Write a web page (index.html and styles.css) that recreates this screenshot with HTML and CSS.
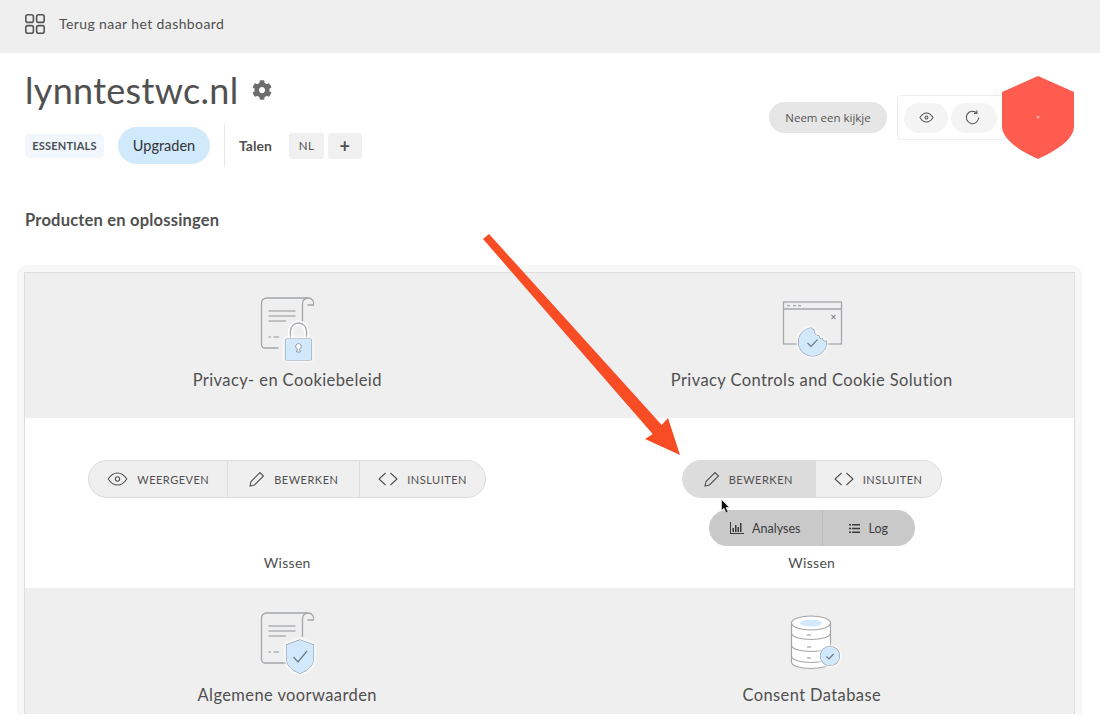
FILE: index.html
```html
<!DOCTYPE html>
<html lang="nl">
<head>
    <meta charset="UTF-8">
    <meta name="viewport" content="width=device-width, initial-scale=1.0">
    <title>lynntestwc.nl</title>
    <link rel="stylesheet" href="styles.css">
</head>
<body>
    <div class="topbar">
        <svg class="grid-icon" viewBox="0 0 20 20" width="20" height="20">
            <rect x="0.8" y="0.8" width="7.6" height="7.6" rx="2"/>
            <rect x="11.6" y="0.8" width="7.6" height="7.6" rx="2"/>
            <rect x="0.8" y="11.6" width="7.6" height="7.6" rx="2"/>
            <rect x="11.6" y="11.6" width="7.6" height="7.6" rx="2"/>
        </svg>
        <span>Terug naar het dashboard</span>
    </div>

    <div class="site-head">
        <div class="site-info">
            <div class="site-title">
                <h1>lynntestwc.nl</h1>
                <svg class="gear" viewBox="0 0 512 512" width="20" height="20"><path d="M487.4 315.7l-42.6-24.6c4.3-23.2 4.3-47 0-70.2l42.6-24.6c4.9-2.8 7.1-8.6 5.5-14-11.1-35.6-30-67.8-54.7-94.6-3.8-4.1-10-5.1-14.8-2.3L380.8 110c-17.9-15.4-38.5-27.3-60.8-35.1V25.8c0-5.6-3.9-10.5-9.4-11.7-36.7-8.2-74.3-7.8-109.2 0-5.5 1.2-9.4 6.1-9.4 11.7V75c-22.2 7.9-42.8 19.8-60.8 35.1L88.7 85.5c-4.9-2.8-11-1.9-14.8 2.3-24.7 26.7-43.6 58.9-54.7 94.6-1.7 5.4.6 11.2 5.5 14L67.3 221c-4.3 23.2-4.3 47 0 70.2l-42.6 24.6c-4.9 2.8-7.1 8.6-5.5 14 11.1 35.6 30 67.8 54.7 94.6 3.8 4.1 10 5.1 14.8 2.3l42.6-24.6c17.9 15.4 38.5 27.3 60.8 35.1v49.2c0 5.6 3.9 10.5 9.4 11.7 36.7 8.2 74.3 7.8 109.2 0 5.5-1.2 9.4-6.1 9.4-11.7v-49.2c22.2-7.9 42.8-19.8 60.8-35.1l42.6 24.6c4.9 2.8 11 1.9 14.8-2.3 24.7-26.7 43.6-58.9 54.7-94.6 1.5-5.5-.7-11.3-5.6-14.1zM256 336c-44.1 0-80-35.9-80-80s35.9-80 80-80 80 35.9 80 80-35.9 80-80 80z"/></svg>
            </div>
            <div class="plan-row">
                <span class="plan-badge">ESSENTIALS</span>
                <span class="upgrade">Upgraden</span>
                <span class="divider"></span>
                <span class="lang-label">Talen</span>
                <span class="lang-btn">NL</span>
                <span class="lang-btn lang-add">+</span>
            </div>
        </div>
        <div class="site-actions">
            <span class="tour-btn">Neem een kijkje</span>
            <div class="tool-box">
                <span class="tool-btn">
                    <svg class="line-icon" viewBox="0 0 16 12" width="15" height="11"><path d="M0.8 6C3 2.6 5.4 1 8 1s5 1.6 7.2 5C13 9.4 10.6 11 8 11S3 9.4 0.8 6z"/><circle cx="8" cy="6" r="1.6"/></svg>
                </span>
                <span class="tool-btn tool-btn-wide">
                    <svg class="line-icon" viewBox="0 0 16 16" width="15" height="15"><path d="M12.6 3.2A6.6 6.6 0 1 0 14.6 8"/><path d="M9.6 3.6l3.2-.2-.2-3"/></svg>
                </span>
            </div>
        </div>
    </div>

    <h2 class="section-title">Producten en oplossingen</h2>

    <div class="products-wrap">
        <div class="products">
            <div class="product-head">
                <svg class="product-icon" viewBox="0 0 70 70" width="70" height="70">
                    <g class="doc">
                        <path d="M26.5 55H13a3.5 3.5 0 0 1-3.5-3.5V10A5 5 0 0 1 14.5 5H56a5.5 5.5 0 0 1 5.5 7H55.5"/>
                        <path d="M56 5a5.5 5.5 0 0 0-5.5 6V29"/>
                    </g>
                    <path class="doc-lines" d="M16.5 18H43.5M16.5 23H43.5M16.5 28H34M16.5 44H19M21.5 44H27"/>
                    <path class="halo" d="M38.5 46V38a8 8 0 0 1 16 0V46"/>
                    <path class="shackle" d="M38.5 46V38a8 8 0 0 1 16 0V46"/>
                    <rect class="badge-fill" x="33.5" y="46" width="26" height="21" rx="1"/>
                    <path class="keyhole" d="M44.5 59l1-3a2.8 2.8 0 1 1 2 0l1 3z"/>
                </svg>
                <span>Privacy- en Cookiebeleid</span>
            </div>
            <div class="product-head">
                <svg class="product-icon" viewBox="0 0 70 70" width="70" height="70">
                    <g transform="translate(1 0)">
                        <rect class="doc" x="5.5" y="9" width="58" height="42"/>
                        <path class="doc" d="M5.5 16H63.5"/>
                        <path class="doc-lines" d="M9 12.7h3M15 12.7h3M20 12.7h3M53.5 22l4 4M57.5 22l-4 4"/>
                        <path class="badge-fill" d="M33 35a14 14 0 1 0 15.5 13.2c-2 .6-3.5-.2-4-2-2 .2-3.5-1-3.5-3-2.5-.5-5-2.5-4.8-5.5C36 37 34.5 36.5 33 35z"/>
                        <path class="check" d="M29.5 50l3.5 3.5 6.5-7"/>
                    </g>
                </svg>
                <span>Privacy Controls and Cookie Solution</span>
            </div>

            <div class="product-body">
                <div class="btn-group">
                    <a class="btn-seg seg-view">
                        <svg class="line-icon" viewBox="0 0 22 15" width="21" height="14"><path d="M1 7.5C4 3 7.3 1 11 1s7 2 10 6.5C18 12 14.7 14 11 14S4 12 1 7.5z"/><circle cx="11" cy="7.5" r="2.3"/></svg>
                        WEERGEVEN
                    </a>
                    <a class="btn-seg seg-edit">
                        <svg class="line-icon" viewBox="0 0 16 16" width="16" height="16"><path d="M1 15l1-4.5L11 1.5l3.5 3.5-9 9z"/></svg>
                        BEWERKEN
                    </a>
                    <a class="btn-seg seg-embed">
                        <svg class="line-icon" viewBox="0 0 20 14" width="20" height="14"><path d="M7.5 1L1 7l6.5 6M12.5 1L19 7l-6.5 6"/></svg>
                        INSLUITEN
                    </a>
                </div>
                <div class="wissen">Wissen</div>
            </div>
            <div class="product-body">
                <div class="btn-group">
                    <a class="btn-seg seg-edit btn-hover">
                        <svg class="line-icon" viewBox="0 0 16 16" width="16" height="16"><path d="M1 15l1-4.5L11 1.5l3.5 3.5-9 9z"/></svg>
                        BEWERKEN
                    </a>
                    <a class="btn-seg seg-embed">
                        <svg class="line-icon" viewBox="0 0 20 14" width="20" height="14"><path d="M7.5 1L1 7l6.5 6M12.5 1L19 7l-6.5 6"/></svg>
                        INSLUITEN
                    </a>
                </div>
                <div class="sub-group">
                    <a class="sub-seg">
                        <svg class="solid-icon" viewBox="0 0 14 12" width="14" height="12"><path d="M0 0h1v11h13v1H0zM2.5 6H4v4H2.5zM5 3h1.5v7H5zM7.5 5H9v5H7.5zM10 1h1.5v9H10z"/></svg>
                        Analyses
                    </a>
                    <a class="sub-seg">
                        <svg class="solid-icon" viewBox="0 0 11 9" width="11" height="9"><path d="M0 0h2v1.6H0zM3 0h8v1.6H3zM0 3.700h2v1.6H0zM3 3.700h8v1.6H3zM0 7.400h2V9H0zM3 7.400h8V9H3z"/></svg>
                        Log
                    </a>
                </div>
                <div class="wissen wissen-tight">Wissen</div>
            </div>

            <div class="product-head">
                <svg class="product-icon" viewBox="0 0 70 70" width="70" height="70">
                    <g class="doc">
                        <path d="M34 55H13a3.5 3.5 0 0 1-3.5-3.5V10A5 5 0 0 1 14.5 5H56a5.5 5.5 0 0 1 5.5 7H55.5"/>
                        <path d="M56 5a5.5 5.5 0 0 0-5.5 6V29"/>
                    </g>
                    <path class="doc-lines" d="M16.5 18H43.5M16.5 23H43.5M16.5 28H34M16.5 44H19M21.5 44H27"/>
                    <path class="badge-fill" d="M48 32l13.5 5v14c0 6-5 11-13.5 14.5C39.5 62 34.5 57 34.5 51V37z"/>
                    <path class="check" d="M41.5 49l4.5 5 9-11"/>
                </svg>
                <span>Algemene voorwaarden</span>
            </div>
            <div class="product-head">
                <svg class="product-icon" viewBox="0 0 70 70" width="70" height="70">
                    <path class="db" d="M14.5 15V54c0 4 9 6.5 19.5 6.5S53.5 58 53.5 54V15"/>
                    <ellipse class="db" cx="34" cy="15" rx="19.5" ry="7"/>
                    <ellipse class="db-top" cx="34" cy="15" rx="11" ry="3.5"/>
                    <path class="db-band" d="M14.5 25c0 4 9 6.5 19.5 6.5S53.5 29 53.5 25M14.5 37c0 4 9 6.5 19.5 6.5S53.5 41 53.5 37M14.5 48c0 4 9 6.5 19.5 6.5S53.5 52 53.5 48"/>
                    <path class="doc-lines" d="M30 27h4M30 39h4M30 50h4"/>
                    <circle class="badge-fill" cx="53" cy="48" r="9.5"/>
                    <path class="check" d="M49.5 48.5l2.5 2.5 4.5-5"/>
                </svg>
                <span>Consent Database</span>
            </div>
        </div>
    </div>

    <svg class="shield" viewBox="0 0 72 83" width="72" height="83">
        <path d="M36 0L72 16V50C72 62 58 73 36 83C14 73 0 62 0 50V16z"/>
        <circle cx="36" cy="41" r="1.6"/>
    </svg>

    <svg class="arrow" viewBox="0 0 200 225" width="200" height="225">
        <path d="M3 9L9 4L181.7 195L188 188L200 225L165 209L172.7 204z"/>
    </svg>

    <svg class="cursor" viewBox="0 0 10 15" width="10" height="15">
        <path d="M0.5 0.5V11.5L3 9.2L5 13.8L7 13L5 8.5H8.3z"/>
    </svg>
</body>
</html>
```

FILE: styles.css
```css
* {
    margin: 0;
    padding: 0;
    box-sizing: border-box;
}

html, body {
    height: 725px;
    overflow: hidden;
}

body {
    position: relative;
    font-family: "Lato", "Open Sans", sans-serif;
    color: #505050;
    background-color: #fff;
}

.topbar {
    display: flex;
    align-items: center;
    gap: 14px;
    height: 53px;
    padding: 0 0 6px 25px;
    background-color: #efefef;
    font-size: 14px;
    letter-spacing: 0.4px;
}

.grid-icon rect {
    fill: none;
    stroke: #555;
    stroke-width: 1.6;
}

.site-head {
    display: flex;
    justify-content: space-between;
    height: 123px;
    padding: 16px 93px 0 25px;
}

.site-title {
    display: flex;
    align-items: center;
    gap: 13px;
    height: 42px;
}

.site-title h1 {
    font-size: 36px;
    font-weight: 400;
    letter-spacing: 0.3px;
}

.gear {
    fill: #6d6d6d;
}

.plan-row {
    display: flex;
    align-items: center;
    margin-top: 13px;
    height: 43px;
}

.plan-badge {
    width: 79px;
    height: 24px;
    line-height: 24px;
    text-align: center;
    font-size: 11px;
    font-weight: 700;
    letter-spacing: 0.2px;
    color: #4a4f55;
    background-color: #f1f7fc;
    border-radius: 4px;
}

.upgrade {
    width: 92px;
    height: 37px;
    line-height: 37px;
    margin-left: 14px;
    text-align: center;
    font-size: 14.5px;
    color: #333;
    background-color: #d0e9fb;
    border-radius: 19px;
}

.divider {
    width: 1px;
    height: 43px;
    margin: 0 14px;
    background-color: #e8e8e8;
}

.lang-label {
    width: 50px;
    font-size: 14px;
    font-weight: 700;
}

.lang-btn {
    width: 35px;
    height: 26px;
    line-height: 26px;
    margin-right: 4px;
    text-align: center;
    font-size: 11.5px;
    letter-spacing: 0.5px;
    background-color: #f0f0f0;
    border-radius: 3px;
}

.lang-add {
    width: 34px;
    font-size: 18px;
    font-weight: 700;
}

.site-actions {
    display: flex;
    align-items: center;
    gap: 10px;
    height: 45px;
    margin-top: 26px;
}

.tour-btn {
    width: 118px;
    height: 31px;
    line-height: 31px;
    text-align: center;
    font-family: "Open Sans", sans-serif;
    font-size: 11.5px;
    color: #555;
    background-color: #e6e6e6;
    border-radius: 16px;
}

.tool-box {
    display: flex;
    align-items: center;
    gap: 3px;
    width: 110px;
    height: 45px;
    padding-left: 6px;
    border: 1px solid #ececec;
    border-radius: 4px;
}

.tool-btn {
    display: flex;
    align-items: center;
    justify-content: center;
    flex: none;
    width: 44px;
    height: 30px;
    background-color: #f4f4f4;
    border-radius: 15px;
}

.tool-btn-wide {
    width: 46px;
    padding-right: 3px;
}

.line-icon {
    flex-shrink: 0;
    fill: none;
    stroke: #505050;
    stroke-width: 1.1;
}

.solid-icon {
    flex-shrink: 0;
    fill: #3a3a3a;
}

.section-title {
    height: 89px;
    padding: 33px 0 0 25px;
    font-size: 16.5px;
    font-weight: 700;
    letter-spacing: 0.2px;
    line-height: 22px;
}

.products-wrap {
    margin: 0 18px 0 17px;
    padding: 7px 7px 0;
    height: 449px;
    background-color: #f7f7f7;
    border-radius: 10px 10px 0 0;
}

.products {
    display: grid;
    grid-template-columns: 1fr 1fr;
    grid-template-rows: 145px 170px 1fr;
    height: 100%;
    background-color: #fff;
    border: 1px solid #dedede;
    border-bottom: none;
}

.product-head {
    display: flex;
    flex-direction: column;
    align-items: center;
    padding-top: 20px;
    font-size: 16.5px;
    letter-spacing: 0.4px;
    background-color: #efefef;
}

.product-head span {
    margin-top: 7px;
}

.product-icon {
    flex-shrink: 0;
}

.doc, .doc g {
    fill: none;
    stroke: #a3a6ab;
    stroke-width: 1.3;
}

.doc-lines {
    fill: none;
    stroke: #8f9296;
    stroke-width: 1.1;
}

.halo {
    fill: none;
    stroke: #fff;
    stroke-width: 5;
}

.shackle {
    fill: none;
    stroke: #a3a6ab;
    stroke-width: 1.3;
}

.badge-fill {
    fill: #d2e9fc;
    stroke: #8d97a5;
    stroke-width: 1.2;
    paint-order: stroke;
    filter: drop-shadow(0 0 1.5px #fff) drop-shadow(0 0 1.5px #fff);
}

.keyhole {
    fill: #fff;
    stroke: #8d97a5;
}

.check {
    fill: none;
    stroke: #6f7a88;
    stroke-width: 1.2;
}

.db {
    fill: #fff;
    stroke: #a3a6ab;
    stroke-width: 1.2;
}

.db-top {
    fill: #d2e9fc;
}

.db-band {
    fill: none;
    stroke: #a3a6ab;
    stroke-width: 1.1;
}

.product-body {
    display: flex;
    flex-direction: column;
    align-items: center;
    padding-top: 42px;
}

.btn-group {
    display: flex;
    height: 38px;
    background-color: #efefef;
    border: 1px solid #dcdcdc;
    border-radius: 19px;
    overflow: hidden;
}

.btn-seg {
    display: flex;
    align-items: center;
    gap: 9px;
    font-size: 11px;
    letter-spacing: 0.5px;
    white-space: nowrap;
    border-left: 1px solid #dcdcdc;
}

.btn-seg:first-child {
    border-left: none;
}

.seg-view {
    width: 138px;
    padding-left: 18px;
}

.seg-edit {
    width: 132px;
    padding-left: 21px;
}

.seg-embed {
    width: 126px;
    padding-left: 18px;
}

.btn-hover {
    background-color: #dcdcdc;
}

.sub-group {
    display: flex;
    width: 206px;
    height: 36px;
    margin-top: 12px;
    background-color: #c9c9c9;
    border-radius: 18px;
    overflow: hidden;
}

.sub-seg {
    display: flex;
    align-items: center;
    justify-content: center;
    gap: 8px;
    flex: 1 1 auto;
    font-size: 12.5px;
    color: #3c3c3c;
}

.sub-seg:first-child {
    width: 114px;
    flex: none;
    border-right: 1px solid #bdbdbd;
}

.wissen {
    margin-top: 56px;
    font-size: 14px;
    letter-spacing: 0.3px;
}

.wissen-tight {
    margin-top: 8px;
}

.shield {
    position: absolute;
    left: 1002px;
    top: 76px;
    fill: #ff5c50;
}

.shield circle {
    fill: #ffa79f;
}

.arrow {
    position: absolute;
    left: 480px;
    top: 230px;
    fill: #f74c24;
}

.cursor {
    position: absolute;
    left: 721px;
    top: 499px;
    fill: #111;
    stroke: #fff;
    stroke-width: 0.5;
}
```
